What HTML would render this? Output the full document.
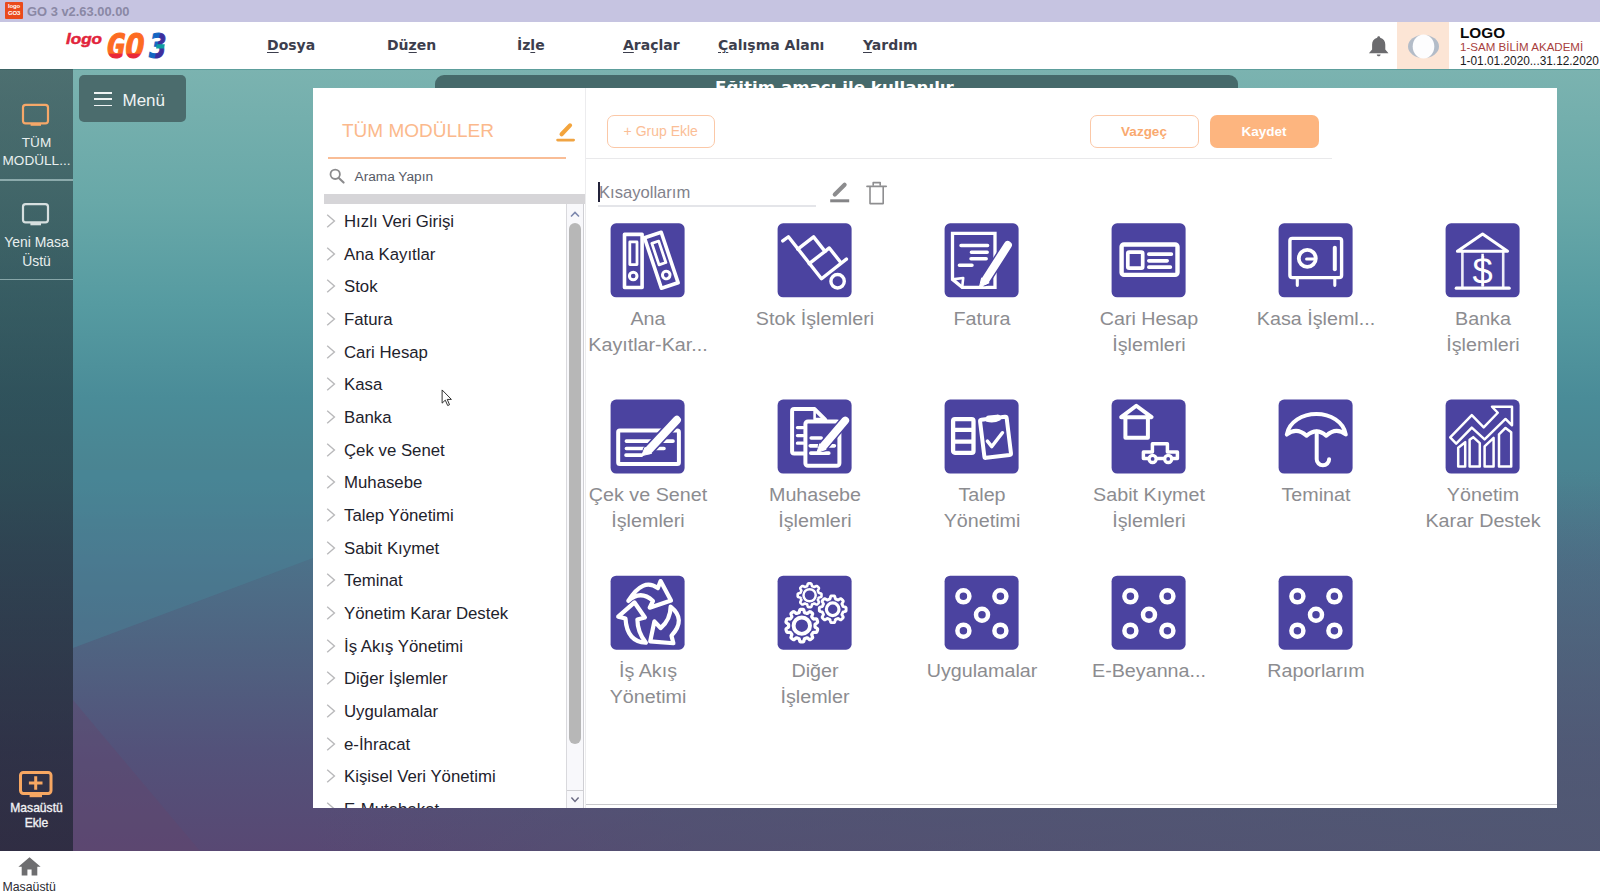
<!DOCTYPE html>
<html lang="tr">
<head>
<meta charset="utf-8">
<title>GO 3 v2.63.00.00</title>
<style>
*{box-sizing:border-box;margin:0;padding:0}
html,body{width:1600px;height:896px;overflow:hidden;background:#fff}
body{position:relative;font-family:"Liberation Sans",sans-serif;color:#222}
svg{display:block;overflow:visible}
.abs{position:absolute}
#titlebar{position:absolute;left:0;top:0;width:1600px;height:22px;background:#c6c4e1}
#titlebar .ico{position:absolute;left:5px;top:2px;width:18px;height:17px;background:#ea4a1c;border-radius:1px;overflow:hidden;color:#fff;font:bold 6px/7px "Liberation Sans",sans-serif;text-align:center;padding-top:1px;letter-spacing:-.2px}
#titlebar .t{position:absolute;left:27px;top:4px;font:bold 12.9px "Liberation Sans",sans-serif;color:#8a88a5;white-space:nowrap;line-height:15px}
#menubar{position:absolute;left:0;top:22px;width:1600px;height:47px;background:#fff}
#menubar .mi{position:absolute;top:14px;font:bold 14px "DejaVu Sans","Liberation Sans",sans-serif;color:#3c3e4d;white-space:nowrap;line-height:18px}
#menubar .mi u{text-decoration:underline;text-underline-offset:2px}
#userbox{position:absolute;left:1397px;top:0;width:52px;height:47px;background:#fce5d5}
#uinfo{position:absolute;left:1460px;top:0;white-space:nowrap}
#uinfo .a{position:absolute;left:0;top:1.6px;font:bold 15.3px/17px "Liberation Sans",sans-serif;color:#0a0a0a}
#uinfo .b{position:absolute;left:0;top:19.4px;font:11.55px/13px "Liberation Sans",sans-serif;color:#a8403c}
#uinfo .c{position:absolute;left:0;top:33.2px;font:11.85px/13px "Liberation Sans",sans-serif;color:#1a1a1a}
#desk{position:absolute;left:0;top:69px;width:1600px;height:782px;
 background:linear-gradient(180deg,#7bb3b0 0%,#68a8a8 17%,#569ba1 30%,#4a8c98 42%,#4a8391 52.5%,#4c7189 63%,#4f6381 74%,#53527a 87%,#584873 100%)}
#sidebar{position:absolute;left:0;top:69px;width:73px;height:782px;background:linear-gradient(180deg,rgba(25,35,40,.47),rgba(25,30,40,.64));color:#e9efef;text-align:center}
#sidebar .sep{position:absolute;left:0;width:73px;height:1.5px;background:rgba(200,225,225,.55)}
#sidebar .lbl{position:absolute;left:0;width:73px;font:13.6px/18px "Liberation Sans",sans-serif;white-space:nowrap}
#sidebar .lbl2{position:absolute;left:0;width:73px;font:12.1px/15px "Liberation Sans",sans-serif;white-space:nowrap;color:#f1f1f4;-webkit-text-stroke:.35px #f1f1f4}
#menubtn{position:absolute;left:78.5px;top:75px;width:107.5px;height:46.5px;border-radius:5px;background:#4b6c6d}
#menubtn .l{position:absolute;left:15.5px;width:18px;height:1.6px;background:#eef3f3}
#menubtn .t{position:absolute;left:44px;top:15.6px;font:17px/20px "Liberation Sans",sans-serif;color:#f0f4f4}
#banner{position:absolute;left:435px;top:75px;width:803px;height:20px;border-radius:9px 9px 0 0;background:#466a6b;color:#fff;font:bold 16.7px/22px "DejaVu Sans","Liberation Sans",sans-serif;text-align:left;overflow:hidden;white-space:nowrap}
#banner span{position:absolute;left:280px;top:1.4px}
#bottombar{position:absolute;left:0;top:851px;width:1600px;height:45px;background:#fff}
#bottombar .t{position:absolute;left:2.5px;top:29px;font:12.3px/14px "Liberation Sans",sans-serif;color:#2b2b33}
#panel{position:absolute;left:313px;top:88px;width:1244px;height:720px;background:#fff;overflow:hidden}
#vdiv{position:absolute;left:271.5px;top:0;width:1.5px;height:720px;background:#ececee}
#ptitle{position:absolute;left:29px;top:31px;font:19px/24px "Liberation Sans",sans-serif;color:#fbb98c;white-space:nowrap}
#pline{position:absolute;left:14.5px;top:69px;width:238.5px;height:1.6px;background:#f9bd96}
#search{position:absolute;left:41.5px;top:80.5px;font:13.7px/16px "Liberation Sans",sans-serif;color:#565a66;white-space:nowrap}
#gbar{position:absolute;left:11px;top:106px;width:260.5px;height:10px;background:#d6d5d8}
#list{position:absolute;left:0;top:116px;width:253px;height:604px;overflow:hidden}
#list .it{position:absolute;left:31px;height:24px;font:16.8px/24px "Liberation Sans",sans-serif;color:#1e222c;white-space:nowrap}
#list .ch{position:absolute;left:13px;width:10px;height:14px}
#sb{position:absolute;left:253px;top:116px;width:18px;height:604px;background:#f8f8fb;border-left:1px solid #d9d9dd;border-right:1px solid #cfcfd4}
#sb .th{position:absolute;left:1.5px;top:19px;width:12.5px;height:521px;border-radius:6px;background:#b7b7b7}
.btn{position:absolute;top:27px;height:32.5px;border-radius:7px;text-align:center;white-space:nowrap}
#b1{left:293.5px;width:108.5px;border:1.4px solid #fbc8a7;color:#fbbe96;font:14px/31.6px "Liberation Sans",sans-serif}
#b2{left:776.5px;width:109px;border:1.4px solid #fbc8a7;color:#f9a96f;font:bold 13.5px/31px "Liberation Sans",sans-serif}
#b3{left:896.5px;width:109px;background:#fdb57f;color:#fff;font:bold 13.5px/33.6px "Liberation Sans",sans-serif}
#hline{position:absolute;left:273px;top:69.5px;width:746px;height:1.5px;background:#e9e9eb}
#gname{position:absolute;left:286px;top:94px;font:16.6px/22px "Liberation Sans",sans-serif;color:#82828c;white-space:nowrap}
#gcur{position:absolute;left:285px;top:93.6px;width:1.7px;height:20.6px;background:#23233a}
#gul{position:absolute;left:284.5px;top:117px;width:218.5px;height:1.8px;background:#e4e5e9}
#bline{position:absolute;left:273px;top:716px;width:971px;height:1.3px;background:#c9c9cc}
.tile{position:absolute;width:76px;height:76px}
.tl{position:absolute;width:160px;text-align:center;font:18.7px/26px "Liberation Sans",sans-serif;color:#8c8c90;white-space:nowrap;transform:scaleX(1.055);transform-origin:50% 50%}
.w{fill:none;stroke:#fff;stroke-linecap:round;stroke-linejoin:round}
</style>
</head>
<body>
<div id="titlebar"><div class="ico">logo<br>GO3</div><div class="t">GO 3 v2.63.00.00</div></div>
<div id="menubar">
 <svg class="abs" style="left:60px;top:4px" width="120" height="40" viewBox="0 0 120 40">
  <defs>
   <linearGradient id="gg" gradientUnits="userSpaceOnUse" x1="0" y1="7" x2="0" y2="33.5"><stop offset="0" stop-color="#fd6b22"/><stop offset=".76" stop-color="#fd6b22"/><stop offset=".8" stop-color="#e9283a"/><stop offset="1" stop-color="#e9283a"/></linearGradient>
   <linearGradient id="g3" gradientUnits="userSpaceOnUse" x1="89" y1="0" x2="108" y2="4"><stop offset="0" stop-color="#1466c2"/><stop offset=".6" stop-color="#1466c2"/><stop offset=".66" stop-color="#3c2f9e"/><stop offset="1" stop-color="#3c2f9e"/></linearGradient>
  </defs>
  <text x="6" y="17.6" font-family="Liberation Sans, sans-serif" font-weight="bold" font-style="italic" font-size="15" fill="#e2243b" stroke="#e2243b" stroke-width=".5" textLength="36" lengthAdjust="spacingAndGlyphs">logo</text>
  <text x="46.5" y="32.2" font-family="DejaVu Sans Mono, Liberation Mono, monospace" font-weight="bold" font-style="oblique" font-size="33" fill="url(#gg)" stroke="url(#gg)" stroke-width="1.1" stroke-linejoin="miter" textLength="38" lengthAdjust="spacingAndGlyphs">GO</text>
  <text x="89.5" y="32.2" font-family="DejaVu Sans Mono, Liberation Mono, monospace" font-weight="bold" font-style="oblique" font-size="33" fill="url(#g3)" stroke="url(#g3)" stroke-width="1.1" stroke-linejoin="miter" textLength="17" lengthAdjust="spacingAndGlyphs">3</text>
  <rect x="96.5" y="18.2" width="8" height="4.4" fill="#0f9ea2" transform="skewX(-10)" transform-origin="101 20"/>
 </svg>
 <div class="mi" style="left:267px"><u>D</u>osya</div>
 <div class="mi" style="left:387px">Dü<u>z</u>en</div>
 <div class="mi" style="left:517px">İz<u>l</u>e</div>
 <div class="mi" style="left:623px"><u>A</u>raçlar</div>
 <div class="mi" style="left:718px"><u>Ç</u>alışma Alanı</div>
 <div class="mi" style="left:863px"><u>Y</u>ardım</div>
 <svg class="abs" style="left:1367.4px;top:13px" width="23.4" height="22" viewBox="0 0 22 22" preserveAspectRatio="none">
  <path d="M11 1.2 C11.9 1.2 12.4 1.9 12.4 2.7 C15.6 3.5 17.2 6.2 17.2 9.6 L17.2 14.6 L20.2 18.3 L1.8 18.3 L4.8 14.6 L4.8 9.6 C4.8 6.2 6.4 3.5 9.6 2.7 C9.6 1.9 10.1 1.2 11 1.2Z" fill="#6b6b6e"/>
  <path d="M9.2 19.4 L12.8 19.4 C12.8 20.5 12 21.2 11 21.2 C10 21.2 9.2 20.5 9.2 19.4Z" fill="#6b6b6e"/>
 </svg>
 <div id="userbox">
  <svg class="abs" style="left:10px;top:12px" width="33" height="25" viewBox="0 0 33 25">
   <ellipse cx="16.5" cy="12.5" rx="15.5" ry="11.5" fill="#b3bcc8"/>
   <ellipse cx="16.5" cy="12.5" rx="10.8" ry="12" fill="#fdfdfe"/>
  </svg>
 </div>
 <div id="uinfo"><div class="a">LOGO</div><div class="b">1-SAM BİLİM AKADEMİ</div><div class="c">1-01.01.2020...31.12.2020</div></div>
</div>
<div id="desk"><div class="abs" style="left:0;top:0;width:1600px;height:1.2px;background:rgba(70,140,140,.55)"></div><svg class="abs" style="left:0;top:0" width="1600" height="782" viewBox="0 69 1600 782"><polygon points="73,470 313,470 313,558 73,648" fill="#48899a" fill-opacity=".38"/><polygon points="73,700 200,851 73,851" fill="#64456b" fill-opacity=".36"/></svg>
<div class="abs" style="left:313px;top:739px;width:1287px;height:43px;background:linear-gradient(90deg,rgba(78,88,112,0) 0,rgba(78,88,112,.5) 30%,rgba(78,92,114,.72) 100%)"></div>
<div class="abs" style="left:1557px;top:400px;width:43px;height:339px;background:linear-gradient(180deg,rgba(78,100,120,0) 0,rgba(78,98,118,.45) 50%,rgba(78,92,114,.72) 100%)"></div>
</div>
<div id="sidebar">
 <svg class="abs" style="left:20px;top:33px" width="32" height="26" viewBox="0 0 32 26"><rect x="3" y="2.8" width="25" height="18.6" rx="2.6" fill="none" stroke="#f6a869" stroke-width="2.2"/><rect x="10.6" y="21.4" width="10.4" height="2.4" fill="#f6a869"/></svg>
 <div class="lbl" style="top:65px">TÜM</div>
 <div class="lbl" style="top:83.3px">MODÜLL...</div>
 <div class="sep" style="top:110px"></div>
 <svg class="abs" style="left:20px;top:132px" width="32" height="26" viewBox="0 0 32 26"><rect x="3" y="3.2" width="25" height="18.2" rx="2.6" fill="none" stroke="#d6dfdf" stroke-width="2.2"/><rect x="10.4" y="21.4" width="10.6" height="2.9" fill="#d6dfdf"/></svg>
 <div class="lbl" style="top:164px;font-size:13.9px">Yeni Masa</div>
 <div class="lbl" style="top:182.6px;font-size:13.9px">Üstü</div>
 <div class="sep" style="top:209.7px"></div>
 <svg class="abs" style="left:18px;top:700px" width="36" height="30" viewBox="0 0 36 30"><rect x="2.5" y="3.4" width="30.5" height="21" rx="2.8" fill="none" stroke="#f7a762" stroke-width="3"/><rect x="11.6" y="25" width="12.4" height="3.2" fill="#f7a762"/><path d="M17.7 7.2V20.8M10.9 14H24.5" stroke="#f7a762" stroke-width="3" fill="none"/></svg>
 <div class="lbl2" style="top:732px">Masaüstü</div>
 <div class="lbl2" style="top:747px">Ekle</div>
</div>
<div id="menubtn"><div class="l" style="top:17.2px"></div><div class="l" style="top:23.4px"></div><div class="l" style="top:29.7px"></div><div class="t">Menü</div></div>
<div id="banner"><span>Eğitim amacı ile kullanılır</span></div>
<div id="bottombar">
 <svg class="abs" style="left:18px;top:6px" width="23" height="19" viewBox="0 0 23 19"><path d="M11.5 0.2 L22.6 9.8 L19.3 9.8 L19.3 18.6 L13.6 18.6 L13.6 12.4 L9.4 12.4 L9.4 18.6 L3.7 18.6 L3.7 9.8 L0.4 9.8Z" fill="#6e6e70"/></svg>
 <div class="t">Masaüstü</div>
</div>
<div id="panel">
 <div id="ptitle">TÜM MODÜLLER</div>
 <svg class="abs" style="left:242px;top:34px" width="22" height="22" viewBox="0 0 22 22"><path d="M6.6 12.3 L15 3.4" stroke="#f3a43c" stroke-width="4.2" stroke-linecap="round" fill="none"/><path d="M2.6 18.1 H18.6" stroke="#f0a443" stroke-width="2.8" stroke-linecap="round" fill="none"/></svg>
 <div id="pline"></div>
 <svg class="abs" style="left:15px;top:80px" width="18" height="18" viewBox="0 0 18 18"><circle cx="7.2" cy="6.3" r="4.7" fill="none" stroke="#8b8b8d" stroke-width="1.8"/><path d="M10.8 9.9 L15.6 14.6" stroke="#8b8b8d" stroke-width="2.1" stroke-linecap="round"/></svg>
 <div id="search">Arama Yapın</div>
 <div id="gbar"></div>
 <div id="list">
  <svg class="ch" style="top:10.0px" viewBox="0 0 10 14"><path d="M1.2 0.8 L8.4 7 L1.2 13.2" fill="none" stroke="#b9b9bb" stroke-width="1.4"/></svg><div class="it" style="top:5.85px">Hızlı Veri Girişi</div>
  <svg class="ch" style="top:42.7px" viewBox="0 0 10 14"><path d="M1.2 0.8 L8.4 7 L1.2 13.2" fill="none" stroke="#b9b9bb" stroke-width="1.4"/></svg><div class="it" style="top:38.52px">Ana Kayıtlar</div>
  <svg class="ch" style="top:75.3px" viewBox="0 0 10 14"><path d="M1.2 0.8 L8.4 7 L1.2 13.2" fill="none" stroke="#b9b9bb" stroke-width="1.4"/></svg><div class="it" style="top:71.19px">Stok</div>
  <svg class="ch" style="top:108.0px" viewBox="0 0 10 14"><path d="M1.2 0.8 L8.4 7 L1.2 13.2" fill="none" stroke="#b9b9bb" stroke-width="1.4"/></svg><div class="it" style="top:103.86px">Fatura</div>
  <svg class="ch" style="top:140.7px" viewBox="0 0 10 14"><path d="M1.2 0.8 L8.4 7 L1.2 13.2" fill="none" stroke="#b9b9bb" stroke-width="1.4"/></svg><div class="it" style="top:136.53px">Cari Hesap</div>
  <svg class="ch" style="top:173.3px" viewBox="0 0 10 14"><path d="M1.2 0.8 L8.4 7 L1.2 13.2" fill="none" stroke="#b9b9bb" stroke-width="1.4"/></svg><div class="it" style="top:169.20px">Kasa</div>
  <svg class="ch" style="top:206.0px" viewBox="0 0 10 14"><path d="M1.2 0.8 L8.4 7 L1.2 13.2" fill="none" stroke="#b9b9bb" stroke-width="1.4"/></svg><div class="it" style="top:201.87px">Banka</div>
  <svg class="ch" style="top:238.7px" viewBox="0 0 10 14"><path d="M1.2 0.8 L8.4 7 L1.2 13.2" fill="none" stroke="#b9b9bb" stroke-width="1.4"/></svg><div class="it" style="top:234.54px">Çek ve Senet</div>
  <svg class="ch" style="top:271.4px" viewBox="0 0 10 14"><path d="M1.2 0.8 L8.4 7 L1.2 13.2" fill="none" stroke="#b9b9bb" stroke-width="1.4"/></svg><div class="it" style="top:267.21px">Muhasebe</div>
  <svg class="ch" style="top:304.0px" viewBox="0 0 10 14"><path d="M1.2 0.8 L8.4 7 L1.2 13.2" fill="none" stroke="#b9b9bb" stroke-width="1.4"/></svg><div class="it" style="top:299.88px">Talep Yönetimi</div>
  <svg class="ch" style="top:336.7px" viewBox="0 0 10 14"><path d="M1.2 0.8 L8.4 7 L1.2 13.2" fill="none" stroke="#b9b9bb" stroke-width="1.4"/></svg><div class="it" style="top:332.55px">Sabit Kıymet</div>
  <svg class="ch" style="top:369.4px" viewBox="0 0 10 14"><path d="M1.2 0.8 L8.4 7 L1.2 13.2" fill="none" stroke="#b9b9bb" stroke-width="1.4"/></svg><div class="it" style="top:365.22px">Teminat</div>
  <svg class="ch" style="top:402.0px" viewBox="0 0 10 14"><path d="M1.2 0.8 L8.4 7 L1.2 13.2" fill="none" stroke="#b9b9bb" stroke-width="1.4"/></svg><div class="it" style="top:397.89px">Yönetim Karar Destek</div>
  <svg class="ch" style="top:434.7px" viewBox="0 0 10 14"><path d="M1.2 0.8 L8.4 7 L1.2 13.2" fill="none" stroke="#b9b9bb" stroke-width="1.4"/></svg><div class="it" style="top:430.56px">İş Akış Yönetimi</div>
  <svg class="ch" style="top:467.4px" viewBox="0 0 10 14"><path d="M1.2 0.8 L8.4 7 L1.2 13.2" fill="none" stroke="#b9b9bb" stroke-width="1.4"/></svg><div class="it" style="top:463.23px">Diğer İşlemler</div>
  <svg class="ch" style="top:500.1px" viewBox="0 0 10 14"><path d="M1.2 0.8 L8.4 7 L1.2 13.2" fill="none" stroke="#b9b9bb" stroke-width="1.4"/></svg><div class="it" style="top:495.90px">Uygulamalar</div>
  <svg class="ch" style="top:532.7px" viewBox="0 0 10 14"><path d="M1.2 0.8 L8.4 7 L1.2 13.2" fill="none" stroke="#b9b9bb" stroke-width="1.4"/></svg><div class="it" style="top:528.57px">e-İhracat</div>
  <svg class="ch" style="top:565.4px" viewBox="0 0 10 14"><path d="M1.2 0.8 L8.4 7 L1.2 13.2" fill="none" stroke="#b9b9bb" stroke-width="1.4"/></svg><div class="it" style="top:561.24px">Kişisel Veri Yönetimi</div>
  <svg class="ch" style="top:598.1px" viewBox="0 0 10 14"><path d="M1.2 0.8 L8.4 7 L1.2 13.2" fill="none" stroke="#b9b9bb" stroke-width="1.4"/></svg><div class="it" style="top:593.91px">E-Mutabakat</div>
 </div>
 <div id="sb"><div class="th"></div><div class="abs" style="left:0;top:585.5px;width:16px;height:1px;background:#d0d0d4"></div>
  <svg class="abs" style="left:3px;top:7px" width="10" height="7" viewBox="0 0 10 7"><path d="M1 5.6 L5 1.4 L9 5.6" fill="none" stroke="#7b86ad" stroke-width="1.5"/></svg>
  <svg class="abs" style="left:3px;top:592.4px" width="10" height="7" viewBox="0 0 10 7"><path d="M1.4 1.4 L5 5.4 L8.6 1.4" fill="none" stroke="#6c6c84" stroke-width="1.5"/></svg>
 </div>
 <div id="vdiv"></div>
 <div class="btn" id="b1">+ Grup Ekle</div>
 <div class="btn" id="b2">Vazgeç</div>
 <div class="btn" id="b3">Kaydet</div>
 <div id="hline"></div>
 <div id="gname">Kısayollarım</div><div id="gcur"></div><div id="gul"></div>
 <svg class="abs" style="left:515px;top:92px" width="24" height="24" viewBox="0 0 24 24"><path d="M6.8 14.6 L16.6 4.8" stroke="#8c8c8e" stroke-width="4.2" stroke-linecap="round" fill="none"/><path d="M2.2 20.8 H21.2" stroke="#858587" stroke-width="3" fill="none"/></svg>
 <svg class="abs" style="left:552px;top:92px" width="24" height="26" viewBox="0 0 24 26"><path d="M5 6.6 V23.6 H18.2 V6.6" fill="none" stroke="#8e8e90" stroke-width="1.6" stroke-linejoin="round"/><path d="M2 6.3 H21.2" stroke="#8e8e90" stroke-width="1.7" stroke-linecap="round"/><path d="M8.2 5.8 V2.6 H15.2 V5.8" fill="none" stroke="#8e8e90" stroke-width="1.6" stroke-linejoin="round"/></svg>
 <div id="bline"></div>
 <div class="tile" style="left:297px;top:135px"><svg width="76" height="76" viewBox="0 0 76 76"><g transform="translate(0.60,0.35)"><rect x="0" y="0" width="74" height="74" rx="5.5" fill="#4b43a0"/><g class="w" stroke-linejoin="miter"><rect x="13.9" y="11" width="17.6" height="53.2" stroke-width="3.6"/><rect x="19.2" y="18.6" width="7.2" height="22.6" stroke-width="2.8"/><circle cx="22.6" cy="52.7" r="3.8" stroke-width="3"/><g transform="translate(50.7,36.9) rotate(-18.5)"><rect x="-8.8" y="-26.6" width="17.6" height="53.2" stroke-width="3.6"/><rect x="-3.6" y="-19" width="7.2" height="22.6" stroke-width="2.8"/><circle cx="0" cy="15.6" r="3.8" stroke-width="3"/></g></g></g></svg></div>
 <div class="tl" style="left:254.6px;top:217.9px">Ana</div>
 <div class="tl" style="left:254.6px;top:243.9px">Kayıtlar-Kar...</div>
 <div class="tile" style="left:464px;top:135px"><svg width="76" height="76" viewBox="0 0 76 76"><g transform="translate(0.60,0.35)"><rect x="0" y="0" width="74" height="74" rx="5.5" fill="#4b43a0"/><g class="w" stroke-width="3.4"><path d="M5.2 17.6 L10.8 13.4 L43.9 55.4 L68.8 35.8"/><path d="M20.2 25.8 L36 13.5 L47.4 28 L31.6 40.3"/><path d="M47.4 28 L51.7 24.6 L62.8 38.7"/><circle cx="60" cy="57.9" r="6.7"/></g></g></svg></div>
 <div class="tl" style="left:421.6px;top:217.9px">Stok İşlemleri</div>
 <div class="tile" style="left:631px;top:135px"><svg width="76" height="76" viewBox="0 0 76 76"><g transform="translate(0.60,0.35)"><rect x="0" y="0" width="74" height="74" rx="5.5" fill="#4b43a0"/><g class="w"><path d="M7.9 10.1 H50.4 V64 H17.6 L7.9 56 Z" stroke-width="3.3" stroke-linejoin="miter"/><path d="M7.9 56 L18.6 54.6 L17.6 64" stroke-width="2.6"/><path d="M16.4 22.2 H43 M26.8 28.9 H42.6 M26.4 35.5 H41.6 M14.8 42 H27.4" stroke-width="3.5"/></g><path d="M63.2 21.8 L40.4 57.4" stroke="#4b43a0" stroke-width="11" stroke-linecap="round" fill="none"/><path d="M63.2 21.8 L40.8 56.8" stroke="#fff" stroke-width="8.2" stroke-linecap="round" fill="none"/><path d="M37 54.6 L34.8 63.8 L44.6 59.4Z" fill="#fff" stroke="#fff" stroke-width="1" stroke-linejoin="round"/></g></svg></div>
 <div class="tl" style="left:588.6px;top:217.9px">Fatura</div>
 <div class="tile" style="left:798px;top:135px"><svg width="76" height="76" viewBox="0 0 76 76"><g transform="translate(0.60,0.35)"><rect x="0" y="0" width="74" height="74" rx="5.5" fill="#4b43a0"/><g class="w"><rect x="10" y="21.1" width="55.9" height="30.4" rx="2.4" stroke-width="4.4"/><rect x="16.2" y="28.8" width="14.9" height="15.9" rx="1.4" stroke-width="3.7"/><path d="M37.2 30.8 H59.8 M37.2 37.5 H55.6 M37.2 43.8 H58.8" stroke-width="3.6"/></g></g></svg></div>
 <div class="tl" style="left:755.6px;top:217.9px">Cari Hesap</div>
 <div class="tl" style="left:755.6px;top:243.9px">İşlemleri</div>
 <div class="tile" style="left:965px;top:135px"><svg width="76" height="76" viewBox="0 0 76 76"><g transform="translate(0.60,0.35)"><rect x="0" y="0" width="74" height="74" rx="5.5" fill="#4b43a0"/><g class="w"><rect x="11.3" y="15" width="51.7" height="39.3" rx="2.4" stroke-width="3.4"/><path d="M18.7 56 V62 M56.2 56 V62" stroke-width="3.1"/><circle cx="28.7" cy="35.1" r="8.5" stroke-width="3.8"/><path d="M28 35.6 H36" stroke-width="3.1"/><path d="M56.2 24.4 V45.8" stroke-width="4"/></g></g></svg></div>
 <div class="tl" style="left:922.6px;top:217.9px">Kasa İşleml...</div>
 <div class="tile" style="left:1132px;top:135px"><svg width="76" height="76" viewBox="0 0 76 76"><g transform="translate(0.60,0.35)"><rect x="0" y="0" width="74" height="74" rx="5.5" fill="#4b43a0"/><g class="w"><path d="M11.8 27.9 L37 10.6 L62 27.9 Z" stroke-width="3"/><path d="M16.8 28 V64.5 M57.6 28 V64.5" stroke-width="2.6" stroke-opacity=".9"/><path d="M10.6 64.8 H63.6" stroke-width="3.1"/></g><text transform="translate(37,60.7) scale(0.98,1)" text-anchor="middle" font-family="Liberation Sans, sans-serif" font-size="37" fill="#fff">$</text><path d="M37 30.4 V63.4" stroke="#fff" stroke-width="2.5" fill="none"/></g></svg></div>
 <div class="tl" style="left:1089.6px;top:217.9px">Banka</div>
 <div class="tl" style="left:1089.6px;top:243.9px">İşlemleri</div>
 <div class="tile" style="left:297px;top:311px"><svg width="76" height="76" viewBox="0 0 76 76"><g transform="translate(0.60,0.55)"><rect x="0" y="0" width="74" height="74" rx="5.5" fill="#4b43a0"/><g class="w"><rect x="7.6" y="30.9" width="60.7" height="33.6" rx="1.6" stroke-width="4"/><path d="M15.8 41.6 H62.4 M15.8 49 H53.4 M15.4 55.6 H31" stroke-width="3.6"/></g><path d="M66.2 20.4 L37.6 51" stroke="#4b43a0" stroke-width="11.4" stroke-linecap="round" fill="none"/><path d="M66.2 20.4 L38.2 50.4" stroke="#fff" stroke-width="8.2" stroke-linecap="round" fill="none"/><path d="M34.4 47.8 L31 56.2 L41 53.8Z" fill="#fff" stroke="#fff" stroke-width="1" stroke-linejoin="round"/></g></svg></div>
 <div class="tl" style="left:254.6px;top:394.1px">Çek ve Senet</div>
 <div class="tl" style="left:254.6px;top:420.1px">İşlemleri</div>
 <div class="tile" style="left:464px;top:311px"><svg width="76" height="76" viewBox="0 0 76 76"><g transform="translate(0.60,0.55)"><rect x="0" y="0" width="74" height="74" rx="5.5" fill="#4b43a0"/><g class="w"><path d="M26 54 H16.6 Q14.5 54 14.5 52 V11.6 Q14.5 9.5 16.6 9.5 H37 L47.6 20" stroke-width="4"/><path d="M37 9.5 V19.6 H47" stroke-width="2.6"/><path d="M19.8 28 H25.6 M19.8 36 H25.6 M19.8 43.6 H25.6" stroke-width="3.2"/><rect x="27.8" y="21.9" width="34" height="44.4" rx="2.6" stroke-width="4" fill="#4b43a0"/><path d="M33.6 38.4 H43.6 M32.6 46.3 H56.8 M33.2 53.6 H51.2" stroke-width="3.6"/></g><path d="M67.6 21 L45.4 47" stroke="#4b43a0" stroke-width="10.6" stroke-linecap="round" fill="none"/><path d="M67.6 21 L45.8 46.6" stroke="#fff" stroke-width="7.8" stroke-linecap="round" fill="none"/><path d="M42.2 44.2 L39.4 52.8 L48.6 49.8Z" fill="#fff" stroke="#fff" stroke-width="1" stroke-linejoin="round"/></g></svg></div>
 <div class="tl" style="left:421.6px;top:394.1px">Muhasebe</div>
 <div class="tl" style="left:421.6px;top:420.1px">İşlemleri</div>
 <div class="tile" style="left:631px;top:311px"><svg width="76" height="76" viewBox="0 0 76 76"><g transform="translate(0.60,0.55)"><rect x="0" y="0" width="74" height="74" rx="5.5" fill="#4b43a0"/><g class="w"><rect x="8.5" y="19.6" width="20.4" height="33.7" rx="1.8" stroke-width="4.3"/><path d="M8.5 30.3 H28.9 M8.5 42.1 H28.9" stroke-width="4.3" stroke-linecap="butt"/><g transform="translate(50.9,37.6) rotate(-7)"><rect x="-13.4" y="-19" width="26.8" height="38.4" rx="1.6" stroke-width="4"/><path d="M-6.6 -19.4 Q-6.6 -21.4 -4 -21.4 H4 Q6.6 -21.4 6.6 -19.4 V-17 Q0 -14.2 -6.6 -17 Z" fill="#fff" stroke-width="1.6"/></g><path d="M42.8 41.6 L47.2 47 L57.8 33.2" stroke-width="3.5"/></g></g></svg></div>
 <div class="tl" style="left:588.6px;top:394.1px">Talep</div>
 <div class="tl" style="left:588.6px;top:420.1px">Yönetimi</div>
 <div class="tile" style="left:798px;top:311px"><svg width="76" height="76" viewBox="0 0 76 76"><g transform="translate(0.60,0.55)"><rect x="0" y="0" width="74" height="74" rx="5.5" fill="#4b43a0"/><g class="w" stroke-width="4"><path d="M9.6 17.6 L24.7 6.2 L40 17.6 Z" stroke-linejoin="round"/><path d="M13.8 17.6 V38.2 H36.3 V17.6"/><path d="M31.8 52.4 H40.8 V44.2 H55.8 V52.4 H65.8 V59 H31.8 Z" stroke-width="3.5"/><circle cx="41" cy="59.4" r="3.55" stroke-width="3.3" fill="#4b43a0"/><circle cx="56.6" cy="59.4" r="3.55" stroke-width="3.3" fill="#4b43a0"/></g></g></svg></div>
 <div class="tl" style="left:755.6px;top:394.1px">Sabit Kıymet</div>
 <div class="tl" style="left:755.6px;top:420.1px">İşlemleri</div>
 <div class="tile" style="left:965px;top:311px"><svg width="76" height="76" viewBox="0 0 76 76"><g transform="translate(0.60,0.55)"><rect x="0" y="0" width="74" height="74" rx="5.5" fill="#4b43a0"/><g class="w" stroke-width="4"><path d="M8.2 35 C10.5 22 24 14.4 37.8 14.4 C51.6 14.4 65 22 67.2 35 Q57.4 27 47.6 36.2 Q38 27.6 28 36.2 Q18 27 8.2 35 Z"/><path d="M38.1 32 V59.6 A6.2 6.2 0 0 0 50.5 59.6"/></g></g></svg></div>
 <div class="tl" style="left:922.6px;top:394.1px">Teminat</div>
 <div class="tile" style="left:1132px;top:311px"><svg width="76" height="76" viewBox="0 0 76 76"><g transform="translate(0.60,0.55)"><rect x="0" y="0" width="74" height="74" rx="5.5" fill="#4b43a0"/><g class="w" stroke-width="2.5" stroke-linejoin="miter" transform="translate(-1,.8)"><path d="M5.6 37 L27.2 14.8 L39.1 27 L53.2 12.4 L47.4 6.4 H67.4 V25 L60.9 18.6 L40 39 L27.2 27.2 L11.6 43.2 Z"/><path d="M13.6 66.2 V47.4 L20.6 41.8 V66.2 Z"/><path d="M25 66.2 V39.4 L28.6 36.8 L35.2 42.8 V66.2 Z"/><path d="M40 66.2 V46 L49 37.6 V66.2 Z"/><path d="M54.4 66.2 V34 L60.9 27.6 L66.6 32 V66.2 Z"/></g></g></svg></div>
 <div class="tl" style="left:1089.6px;top:394.1px">Yönetim</div>
 <div class="tl" style="left:1089.6px;top:420.1px">Karar Destek</div>
 <div class="tile" style="left:297px;top:487px"><svg width="76" height="76" viewBox="0 0 76 76"><g transform="translate(0.60,0.65)"><rect x="0" y="0" width="74" height="74" rx="5.5" fill="#4b43a0"/><g class="w" stroke-width="4.2"><path d="M17.7 25.3 Q32.4 1.5 47.2 12.5 L50 5.4 L60.4 24.9 L39.1 32 L42.4 25.3 Q30 14 17.7 25.3 Z"/><path d="M60 31 Q76 43.8 60.9 60 L62.8 67.6 L39.6 65.7 L43.8 45.7 L50 52.4 Q60 43.8 60 31 Z"/><path d="M35.3 67.1 Q16.3 66 14.9 42.9 L7.6 41 L23.9 26.8 L34.3 41.9 L26.8 43.8 Q26.8 56.2 35.3 67.1 Z"/></g></g></svg></div>
 <div class="tl" style="left:254.6px;top:570.2px">İş Akış</div>
 <div class="tl" style="left:254.6px;top:596.2px">Yönetimi</div>
 <div class="tile" style="left:464px;top:487px"><svg width="76" height="76" viewBox="0 0 76 76"><g transform="translate(0.60,0.65)"><rect x="0" y="0" width="74" height="74" rx="5.5" fill="#4b43a0"/><g class="w"><path d="M43.9,19.6 43.9,20.1 43.9,20.5 43.8,21.0 43.4,21.4 42.4,21.7 41.5,21.9 41.0,22.2 40.9,22.5 40.8,22.9 40.7,23.2 40.5,23.5 40.4,23.9 40.2,24.2 40.4,24.7 40.9,25.5 41.3,26.4 41.3,27.0 41.0,27.3 40.7,27.7 40.4,28.0 40.1,28.3 39.7,28.6 39.4,28.9 38.8,28.9 37.9,28.5 37.1,28.0 36.6,27.8 36.3,28.0 35.9,28.1 35.6,28.3 35.3,28.4 34.9,28.5 34.6,28.6 34.3,29.1 34.1,30.0 33.8,31.0 33.4,31.4 32.9,31.5 32.5,31.5 32.0,31.5 31.5,31.5 31.1,31.5 30.6,31.4 30.2,31.0 29.9,30.0 29.7,29.1 29.4,28.6 29.1,28.5 28.7,28.4 28.4,28.3 28.1,28.1 27.7,28.0 27.4,27.8 26.9,28.0 26.1,28.5 25.2,28.9 24.6,28.9 24.3,28.6 23.9,28.3 23.6,28.0 23.3,27.7 23.0,27.3 22.7,27.0 22.7,26.4 23.1,25.5 23.6,24.7 23.8,24.2 23.6,23.9 23.5,23.5 23.3,23.2 23.2,22.9 23.1,22.5 23.0,22.2 22.5,21.9 21.6,21.7 20.6,21.4 20.2,21.0 20.1,20.5 20.1,20.1 20.1,19.6 20.1,19.1 20.1,18.7 20.2,18.2 20.6,17.8 21.6,17.5 22.5,17.3 23.0,17.0 23.1,16.7 23.2,16.3 23.3,16.0 23.5,15.7 23.6,15.3 23.8,15.0 23.6,14.5 23.1,13.7 22.7,12.8 22.7,12.2 23.0,11.9 23.3,11.5 23.6,11.2 23.9,10.9 24.3,10.6 24.6,10.3 25.2,10.3 26.1,10.7 26.9,11.2 27.4,11.4 27.7,11.2 28.1,11.1 28.4,10.9 28.7,10.8 29.1,10.7 29.4,10.6 29.7,10.1 29.9,9.2 30.2,8.2 30.6,7.8 31.1,7.7 31.5,7.7 32.0,7.7 32.5,7.7 32.9,7.7 33.4,7.8 33.8,8.2 34.1,9.2 34.3,10.1 34.6,10.6 34.9,10.7 35.3,10.8 35.6,10.9 35.9,11.1 36.3,11.2 36.6,11.4 37.1,11.2 37.9,10.7 38.8,10.3 39.4,10.3 39.7,10.6 40.1,10.9 40.4,11.2 40.7,11.5 41.0,11.9 41.3,12.2 41.3,12.8 40.9,13.7 40.4,14.5 40.2,15.0 40.4,15.3 40.5,15.7 40.7,16.0 40.8,16.3 40.9,16.7 41.0,17.0 41.5,17.3 42.4,17.5 43.4,17.8 43.8,18.2 43.9,18.7 43.9,19.1Z" stroke-width="2.6"/><circle cx="32" cy="19.6" r="6.1" stroke-width="2.5"/><path d="M68.5,33.6 68.5,34.1 68.5,34.7 68.4,35.2 67.9,35.6 66.9,35.9 65.8,36.2 65.3,36.5 65.2,36.9 65.0,37.3 64.9,37.7 64.7,38.0 64.5,38.4 64.3,38.8 64.5,39.4 65.1,40.3 65.6,41.2 65.6,41.9 65.3,42.3 64.9,42.7 64.6,43.1 64.2,43.4 63.8,43.8 63.4,44.1 62.7,44.1 61.8,43.6 60.9,43.0 60.3,42.8 59.9,43.0 59.5,43.2 59.2,43.4 58.8,43.5 58.4,43.7 58.0,43.8 57.7,44.3 57.4,45.4 57.1,46.4 56.7,46.9 56.2,47.0 55.6,47.0 55.1,47.0 54.6,47.0 54.0,47.0 53.5,46.9 53.1,46.4 52.8,45.4 52.5,44.3 52.2,43.8 51.8,43.7 51.4,43.5 51.0,43.4 50.7,43.2 50.3,43.0 49.9,42.8 49.3,43.0 48.4,43.6 47.5,44.1 46.8,44.1 46.4,43.8 46.0,43.4 45.6,43.1 45.3,42.7 44.9,42.3 44.6,41.9 44.6,41.2 45.1,40.3 45.7,39.4 45.9,38.8 45.7,38.4 45.5,38.0 45.3,37.7 45.2,37.3 45.0,36.9 44.9,36.5 44.4,36.2 43.3,35.9 42.3,35.6 41.8,35.2 41.7,34.7 41.7,34.1 41.7,33.6 41.7,33.1 41.7,32.5 41.8,32.0 42.3,31.6 43.3,31.3 44.4,31.0 44.9,30.7 45.0,30.3 45.2,29.9 45.3,29.5 45.5,29.2 45.7,28.8 45.9,28.4 45.7,27.8 45.1,26.9 44.6,26.0 44.6,25.3 44.9,24.9 45.3,24.5 45.6,24.1 46.0,23.8 46.4,23.4 46.8,23.1 47.5,23.1 48.4,23.6 49.3,24.2 49.9,24.4 50.3,24.2 50.7,24.0 51.0,23.8 51.4,23.7 51.8,23.5 52.2,23.4 52.5,22.9 52.8,21.8 53.1,20.8 53.5,20.3 54.0,20.2 54.6,20.2 55.1,20.2 55.6,20.2 56.2,20.2 56.7,20.3 57.1,20.8 57.4,21.8 57.7,22.9 58.0,23.4 58.4,23.5 58.8,23.7 59.2,23.8 59.5,24.0 59.9,24.2 60.3,24.4 60.9,24.2 61.8,23.6 62.7,23.1 63.4,23.1 63.8,23.4 64.2,23.8 64.6,24.1 64.9,24.5 65.3,24.9 65.6,25.3 65.6,26.0 65.1,26.9 64.5,27.8 64.3,28.4 64.5,28.8 64.7,29.2 64.9,29.5 65.0,29.9 65.2,30.3 65.3,30.7 65.8,31.0 66.9,31.3 67.9,31.6 68.4,32.0 68.5,32.5 68.5,33.1Z" stroke-width="2.9"/><circle cx="55.1" cy="33.6" r="6.3" stroke-width="3.2"/><path d="M37.4,50.0 37.4,50.5 37.4,51.0 37.6,51.6 38.8,52.3 39.9,53.1 40.0,53.8 39.9,54.4 39.7,55.0 39.5,55.6 39.3,56.2 38.8,56.7 37.3,56.7 35.9,56.6 35.5,56.9 35.2,57.3 34.9,57.8 34.6,58.2 34.2,58.6 34.1,59.1 34.6,60.4 35.1,61.8 34.8,62.4 34.3,62.8 33.8,63.2 33.3,63.6 32.7,63.9 32.0,64.0 30.9,63.1 29.8,62.2 29.3,62.2 28.8,62.4 28.3,62.6 27.8,62.7 27.3,62.8 26.8,63.2 26.5,64.6 26.1,65.9 25.5,66.2 24.8,66.3 24.2,66.3 23.6,66.3 22.9,66.2 22.3,65.9 21.9,64.6 21.6,63.2 21.1,62.8 20.6,62.7 20.1,62.6 19.6,62.4 19.1,62.2 18.6,62.2 17.5,63.1 16.4,64.0 15.7,63.9 15.1,63.6 14.6,63.2 14.1,62.8 13.6,62.4 13.3,61.8 13.8,60.4 14.3,59.1 14.2,58.6 13.8,58.2 13.5,57.8 13.2,57.3 12.9,56.9 12.5,56.6 11.1,56.7 9.6,56.7 9.1,56.2 8.9,55.6 8.7,55.0 8.5,54.4 8.4,53.8 8.5,53.1 9.6,52.3 10.8,51.6 11.0,51.0 11.0,50.5 11.0,50.0 11.0,49.5 11.0,49.0 10.8,48.4 9.6,47.7 8.5,46.9 8.4,46.2 8.5,45.6 8.7,45.0 8.9,44.4 9.1,43.8 9.6,43.3 11.1,43.3 12.5,43.4 12.9,43.1 13.2,42.7 13.5,42.2 13.8,41.8 14.2,41.4 14.3,40.9 13.8,39.6 13.3,38.2 13.6,37.6 14.1,37.2 14.6,36.8 15.1,36.4 15.7,36.1 16.4,36.0 17.5,36.9 18.6,37.8 19.1,37.8 19.6,37.6 20.1,37.4 20.6,37.3 21.1,37.2 21.6,36.8 21.9,35.4 22.3,34.1 22.9,33.8 23.6,33.7 24.2,33.7 24.8,33.7 25.5,33.8 26.1,34.1 26.5,35.4 26.8,36.8 27.3,37.2 27.8,37.3 28.3,37.4 28.8,37.6 29.3,37.8 29.8,37.8 30.9,36.9 32.0,36.0 32.7,36.1 33.3,36.4 33.8,36.8 34.3,37.2 34.8,37.6 35.1,38.2 34.6,39.6 34.1,40.9 34.2,41.4 34.6,41.8 34.9,42.2 35.2,42.7 35.5,43.1 35.9,43.4 37.3,43.3 38.8,43.3 39.3,43.8 39.5,44.4 39.7,45.0 39.9,45.6 40.0,46.2 39.9,46.9 38.8,47.7 37.6,48.4 37.4,49.0 37.4,49.5Z" stroke-width="3.2"/><circle cx="24.2" cy="50" r="8.2" stroke-width="3.9"/></g></g></svg></div>
 <div class="tl" style="left:421.6px;top:570.2px">Diğer</div>
 <div class="tl" style="left:421.6px;top:596.2px">İşlemler</div>
 <div class="tile" style="left:631px;top:487px"><svg width="76" height="76" viewBox="0 0 76 76"><g transform="translate(0.60,0.65)"><rect x="0" y="0" width="74" height="74" rx="5.5" fill="#4b43a0"/><g class="w" stroke-width="4.5"><circle cx="18.8" cy="20.7" r="6"/><circle cx="55.8" cy="20.7" r="6"/><circle cx="37.4" cy="39.1" r="6"/><circle cx="18.8" cy="55" r="6"/><circle cx="55.8" cy="55" r="6"/></g></g></svg></div>
 <div class="tl" style="left:588.6px;top:570.2px">Uygulamalar</div>
 <div class="tile" style="left:798px;top:487px"><svg width="76" height="76" viewBox="0 0 76 76"><g transform="translate(0.60,0.65)"><rect x="0" y="0" width="74" height="74" rx="5.5" fill="#4b43a0"/><g class="w" stroke-width="4.5"><circle cx="18.8" cy="20.7" r="6"/><circle cx="55.8" cy="20.7" r="6"/><circle cx="37.4" cy="39.1" r="6"/><circle cx="18.8" cy="55" r="6"/><circle cx="55.8" cy="55" r="6"/></g></g></svg></div>
 <div class="tl" style="left:755.6px;top:570.2px">E-Beyanna...</div>
 <div class="tile" style="left:965px;top:487px"><svg width="76" height="76" viewBox="0 0 76 76"><g transform="translate(0.60,0.65)"><rect x="0" y="0" width="74" height="74" rx="5.5" fill="#4b43a0"/><g class="w" stroke-width="4.5"><circle cx="18.8" cy="20.7" r="6"/><circle cx="55.8" cy="20.7" r="6"/><circle cx="37.4" cy="39.1" r="6"/><circle cx="18.8" cy="55" r="6"/><circle cx="55.8" cy="55" r="6"/></g></g></svg></div>
 <div class="tl" style="left:922.6px;top:570.2px">Raporlarım</div>
</div>
<svg class="abs" style="left:441px;top:388.6px" width="13" height="18.6" viewBox="0 0 14 20"><path d="M1.2 1 V15.2 L4.6 12 L7.2 17.8 L9.2 16.9 L6.7 11.2 H11.2 Z" fill="#fff" stroke="#222" stroke-width="1"/></svg>
</body></html>
